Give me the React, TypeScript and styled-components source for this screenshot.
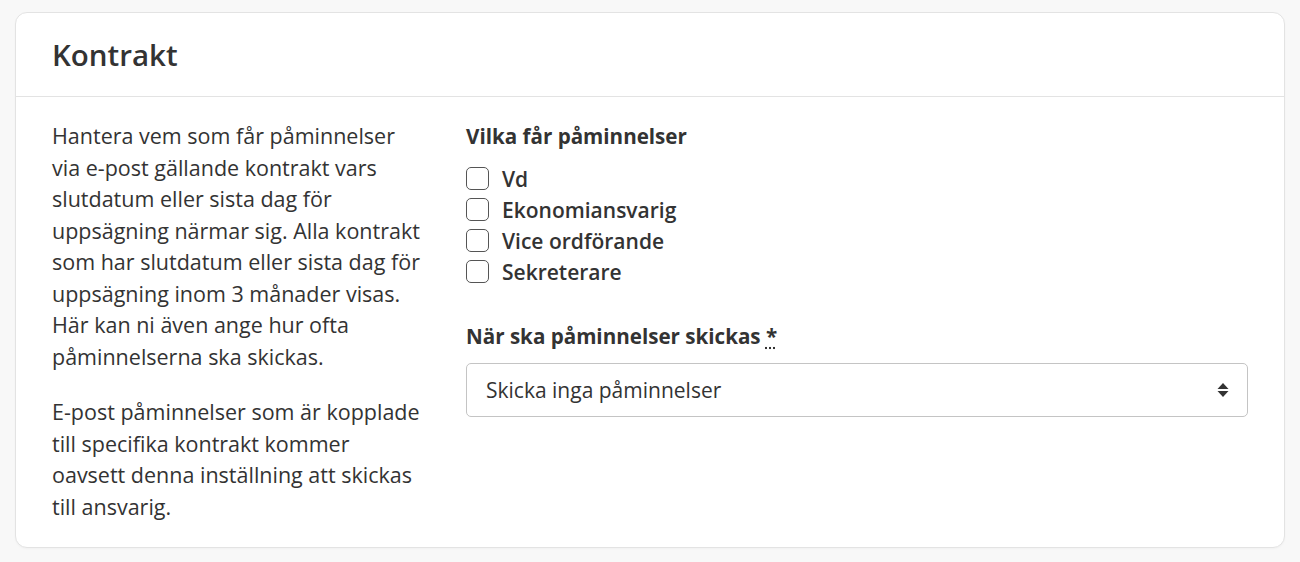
import React from "react";
import styled, { createGlobalStyle } from "styled-components";

const Global = createGlobalStyle`
  html, body { margin: 0; padding: 0; background: #f8f8f8; }
  body {
    font-family: "Open Sans", "Noto Sans", sans-serif;
    color: #333;
  }
  * { box-sizing: border-box; }
`;

const Page = styled.div`
  padding: 12px 15px 14px 15px;
`;

const Card = styled.section`
  background: #fff;
  border: 1px solid #e3e3e3;
  border-radius: 12px;
  box-shadow: 0 1px 2px rgba(0, 0, 0, 0.03);
`;

const Header = styled.header`
  height: 84px;
  display: flex;
  align-items: center;
  padding: 0 36px;
  border-bottom: 1px solid #e3e3e3;
`;

const Title = styled.h2`
  margin: 0 0 1px 0;
  font-size: 29.5px;
  font-weight: 600;
  color: #333;
`;

const Body = styled.div`
  display: grid;
  grid-template-columns: 371px 1fr;
  column-gap: 43px;
  padding: 23px 36px 25px 36px;
`;

const Description = styled.div`
  font-size: 21.5px;
  line-height: 31.5px;
  color: #333;
`;

const Paragraph = styled.p`
  margin: 0 0 24px 0;
  &:last-child { margin-bottom: 0; }
`;

const Form = styled.div`
  display: flex;
  flex-direction: column;
`;

const Fieldset = styled.fieldset`
  border: 0;
  margin: 0 0 33px 0;
  padding: 0;
`;

const Legend = styled.legend`
  padding: 0;
  font-size: 20.6px;
  font-weight: 700;
  line-height: 32px;
  margin-bottom: 11px;
  color: #333;
`;

const CheckRow = styled.label`
  display: flex;
  align-items: center;
  gap: 13px;
  height: 31px;
  font-size: 21px;
  font-weight: 600;
  color: #333;
  cursor: pointer;
`;

const Box = styled.input.attrs({ type: "checkbox" })`
  appearance: none;
  margin: 0;
  width: 23px;
  height: 23px;
  border: 1.5px solid #555;
  border-radius: 5px;
  background: #fff;
`;

const FieldLabel = styled.label`
  font-size: 20.6px;
  font-weight: 700;
  line-height: 32px;
  color: #333;
  margin-bottom: 11px;
`;

const Req = styled.abbr`
  text-decoration: underline dotted;
  text-underline-offset: 3px;
  cursor: help;
`;

const SelectWrap = styled.div`
  position: relative;
`;

const Select = styled.select`
  appearance: none;
  width: 100%;
  height: 54px;
  padding: 0 48px 0 19px;
  border: 1px solid #c4c4c4;
  border-radius: 5px;
  background: #fff;
  font-family: inherit;
  font-size: 21px;
  color: #333;
`;

const Arrows = styled.svg`
  position: absolute;
  right: 19px;
  top: 50%;
  transform: translateY(-50%);
  pointer-events: none;
`;

export default function App() {
  return (
    <>
      <Global />
      <Page>
        <Card>
          <Header>
            <Title>Kontrakt</Title>
          </Header>
          <Body>
            <Description>
              <Paragraph>
                Hantera vem som får påminnelser via e-post gällande kontrakt vars slutdatum eller sista dag för uppsägning närmar sig. Alla kontrakt som har slutdatum eller sista dag för uppsägning inom 3 månader visas. Här kan ni även ange hur ofta påminnelserna ska skickas.
              </Paragraph>
              <Paragraph>
                E-post påminnelser som är kopplade till specifika kontrakt kommer oavsett denna inställning att skickas till ansvarig.
              </Paragraph>
            </Description>
            <Form>
              <Fieldset>
                <Legend>Vilka får påminnelser</Legend>
                {["Vd", "Ekonomiansvarig", "Vice ordförande", "Sekreterare"].map((r) => (
                  <CheckRow key={r}>
                    <Box />
                    {r}
                  </CheckRow>
                ))}
              </Fieldset>
              <FieldLabel htmlFor="freq">
                När ska påminnelser skickas <Req title="obligatoriskt">*</Req>
              </FieldLabel>
              <SelectWrap>
                <Select id="freq" defaultValue="none">
                  <option value="none">Skicka inga påminnelser</option>
                  <option value="weekly">Varje vecka</option>
                  <option value="monthly">Varje månad</option>
                </Select>
                <Arrows width="12" height="16" viewBox="0 0 12 16">
                  <path d="M6 1 L11.5 7 H0.5 Z" fill="#333" />
                  <path d="M6 15 L11.5 9 H0.5 Z" fill="#333" />
                </Arrows>
              </SelectWrap>
            </Form>
          </Body>
        </Card>
      </Page>
    </>
  );
}
